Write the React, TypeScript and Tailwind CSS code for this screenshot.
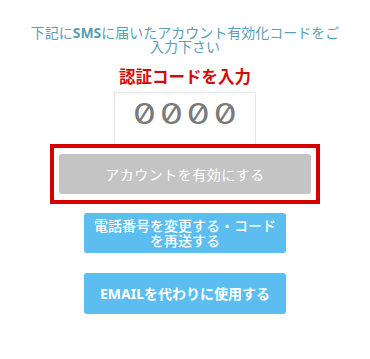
import React from "react";

const font = { fontFamily: '"Noto Sans", "Noto Sans CJK JP", sans-serif' };

// SMS verification code entry screen
const App: React.FC = () => {
  return (
    <div
      className="w-[370px] h-[359px] bg-white flex flex-col items-center pt-[26px]"
      style={font}
    >
      {/* Instruction */}
      <p className="w-[318px] text-center text-[14px] leading-[14px] text-[#5a9fb6]">
        下記に<span className="font-bold">SMS</span>に届いたアカウント有効化コードをご入力下さい
      </p>

      {/* Heading */}
      <h2 className="mt-[12px] text-[16.5px] leading-[22px] font-bold text-[#d40a0a]">
        認証コードを入力
      </h2>

      {/* Code input */}
      <div className="mt-[4px] w-[142px] h-[52px] border border-[#e6e6e6] border-b-0 flex justify-center pt-[2px]">
        <span className="font-['Inter',sans-serif] [font-feature-settings:'zero'] font-normal text-[28px] leading-[38px] tracking-[3px] pl-[3px] scale-x-[1.3] text-[#7a7a7a]">
          0000
        </span>
      </div>

      {/* Highlighted activate button */}
      <div className="w-[270px] h-[60px] border-[4px] border-[#d40000] flex items-center justify-center">
        <button className="w-[252px] h-[40px] rounded-[3px] bg-[#c4c4c4] text-white text-[14px] tracking-[0.5px]">
          アカウントを有効にする
        </button>
      </div>

      {/* Resend */}
      <button className="mt-[9px] w-[202px] h-[40px] rounded-[3px] bg-[#5bbdf0] text-white text-[14px] leading-[15px] font-medium">
        電話番号を変更する・コード
        <br />
        を再送する
      </button>

      {/* Email */}
      <button className="mt-[20px] w-[202px] h-[41px] rounded-[3px] bg-[#5bbdf0] text-white text-[14px] font-bold">
        EMAILを代わりに使用する
      </button>
    </div>
  );
};

export default App;
